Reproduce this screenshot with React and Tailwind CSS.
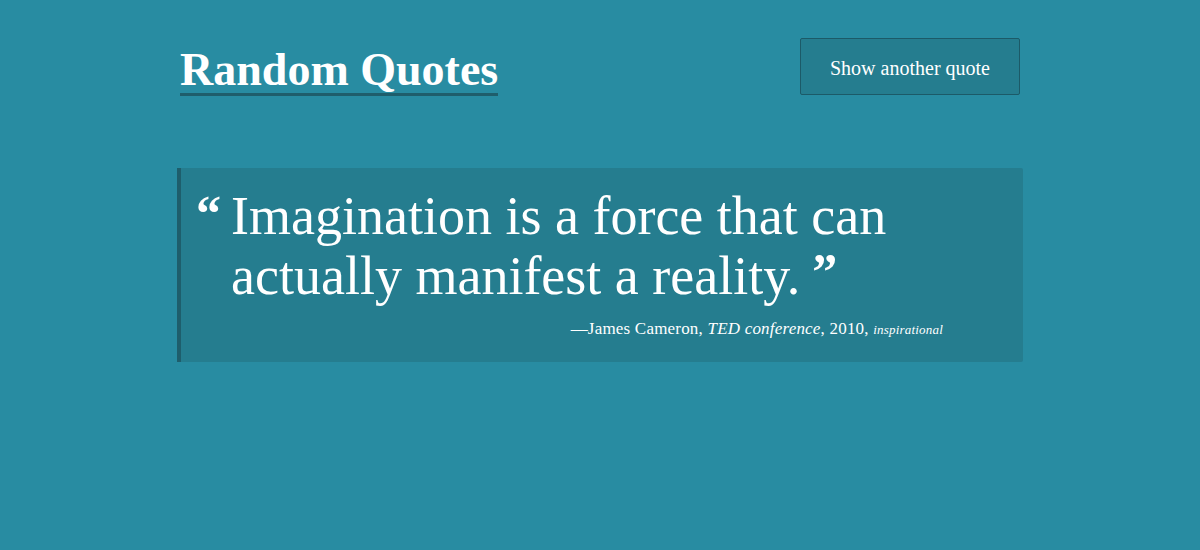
import React from 'react';

const quote = {
  text: 'Imagination is a force that can actually manifest a reality.',
  author: 'James Cameron',
  source: 'TED conference',
  year: '2010',
  tag: 'inspirational',
};

const App = () => {
  return (
    <div className="min-h-screen w-full bg-[#288ca2] text-white font-['Liberation_Serif',serif]">
      <div className="w-[846px] mx-auto">
        {/* Header */}
        <header className="flex justify-between items-start pt-[38px] px-[3px]">
          <h1 className="mt-[9px] text-[46px] leading-[46px] font-bold border-b-[3px] border-[#1f5e6c]">
            Random Quotes
          </h1>
          <button
            type="button"
            className="w-[220px] h-[57px] pt-[2px] bg-[#257d8f] border border-[#1c5a68] rounded-[2px] text-[20px] text-white"
          >
            Show another quote
          </button>
        </header>

        {/* Quote */}
        <blockquote className="mt-[72px] bg-[#257d8f] border-l-[4px] border-[#1e5e6c] rounded-r-[2px] pl-[50px] pr-[80px] pt-[18px] pb-[20px]">
          <p className="relative text-[54px] leading-[60px]">
            <span className="absolute left-[-35px] top-[2px] text-[50px] leading-none font-bold">“</span>
            {quote.text}
            <span className="ml-[12px] align-top text-[50px] leading-none font-bold">”</span>
          </p>
          <footer className="mt-[11px] text-right text-[17px] leading-[24px] tracking-[0.2px]">
            —{quote.author}, <cite className="italic">{quote.source}</cite>, {quote.year},{' '}
            <span className="italic text-[13px]">{quote.tag}</span>
          </footer>
        </blockquote>
      </div>
    </div>
  );
};

export default App;
